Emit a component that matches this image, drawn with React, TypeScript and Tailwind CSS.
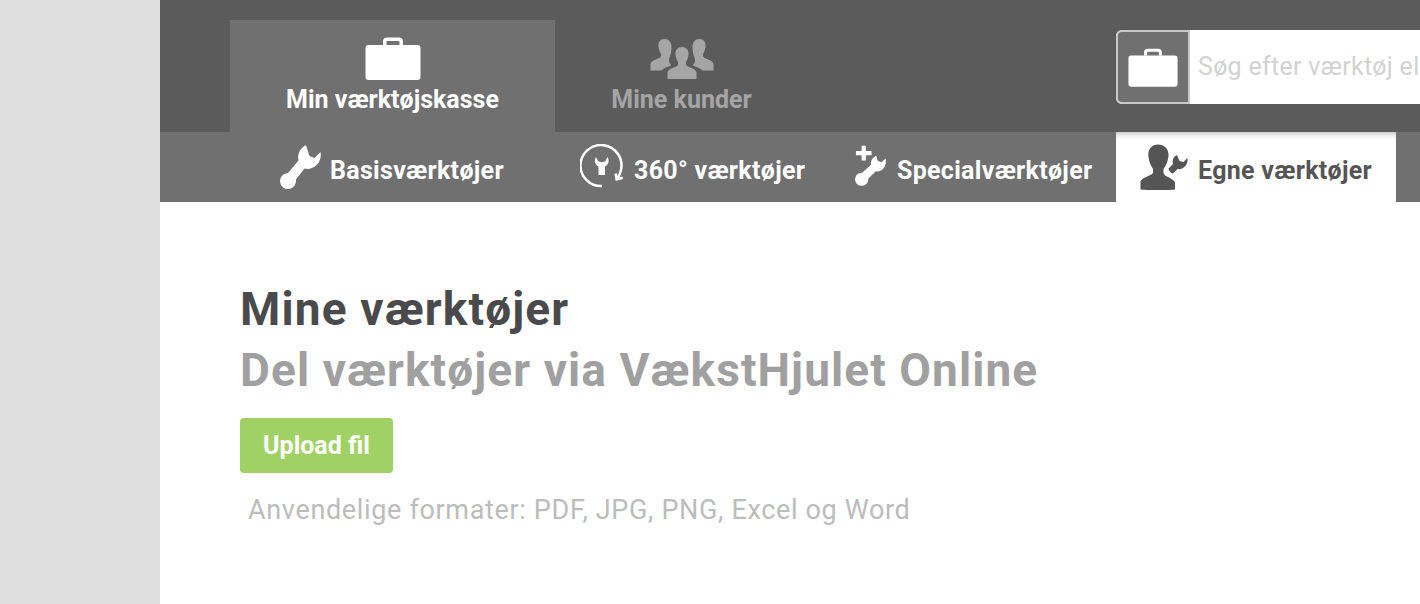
function Briefcase({ className }: { className?: string }) {
  return (
    <svg viewBox="0 0 56 44" className={className} fill="currentColor">
      <path d="M18 9V5.500C18 3 19.500 1.500 22 1.500H34C36.500 1.500 38 3 38 5.500V9H34.500V6C34.500 5.300 34.200 5 33.500 5H22.500C21.800 5 21.500 5.300 21.500 6V9Z" />
      <rect x="0.500" y="9" width="55" height="35" rx="3" />
    </svg>
  );
}

function Wrench({ className }: { className?: string }) {
  return (
    <svg viewBox="0 0 42 46" className={className} fill="currentColor">
      <path d="M26 1.300C20.500 3.500 17 10 18.500 16.500L8 29A8 8 0 1 0 15.900 35.600L24.500 24.500C30 26 36 23 39 18C41 14 41 11 40.500 8L34.500 14L29.500 12Z" />
    </svg>
  );
}

function Wheel({ className }: { className?: string }) {
  return (
    <svg viewBox="0 0 46 46" className={className}>
      <path
        d="M22 42A20.500 20.500 0 1 1 41 26Q40 31 37 35"
        fill="none"
        stroke="currentColor"
        strokeWidth="2.500"
      />
      <path d="M35.700 29.500L36.600 35.500L42.700 33.700" fill="none" stroke="currentColor" strokeWidth="2.500" />
      <path
        d="M16 13C13.500 17 15.500 21 18.500 22.500V31H25V22.500C28 21 30 17 27.500 13L25.500 17C24 18.500 19.500 18.500 18 17Z"
        fill="currentColor"
      />
    </svg>
  );
}

function PlusWrench({ className }: { className?: string }) {
  return (
    <svg viewBox="0 0 36 46" className={className} fill="currentColor">
      <path d="M7 .500H11.500V6H17.500V10.500H11.500V16H7V10.500H1V6H7Z" />
      <path d="M22.500 11C18 13.500 16 17 17 20.500L7.600 29A7 7 0 1 0 14 35.400L22 27.500C27 29 34 24 32.500 14L28 18L24 16.500Z" />
    </svg>
  );
}

function PersonWrench({ className }: { className?: string }) {
  return (
    <svg viewBox="0 0 50 46" className={className} fill="currentColor">
      <path d="M18 .500C11 .500 7.500 6 8.500 13C9 18 11 22 13 25V29C10 32.500 1 33.500 .5 38V45.500C10 46.500 26 46.500 35 45.500V38.500C34 35.500 29 33.500 25 31.500L23.500 29V25C26 21.500 28 17.500 28.500 12C29 5.500 25 .500 18 .500Z" />
      <path d="M37 11C33.500 12.500 32 16.500 33 20L28.500 24.500C28.500 26.500 30.500 29 33 29.500L37.500 25C43 26 48.500 21 47.500 14L43.500 18L39.500 17Z" />
    </svg>
  );
}

function People({ className }: { className?: string }) {
  return (
    <svg viewBox="0 0 64 41" className={className} fill="currentColor">
      <path d="M14.500 1C10 1 8 4.500 8.500 9C9 12 10 14.500 11 16V18.500C9 21 1 22 .5 26V32.500H11.500C14.500 29 21 28.500 21 27C18.500 24.500 18.500 21 20 18.500C21 15.500 21.500 12 21.500 9C21.500 4.500 19 1 14.500 1Z" />
      <path d="M49.500 1C54 1 56 4.500 55.500 9C55 12 54 14.500 53 16V18.500C55 21 63 22 63.500 26V32.500H52.500C49.500 29 43 28.500 43 27C45.500 24.500 45.500 21 44 18.500C43 15.500 42.500 12 42.500 9C42.500 4.500 45 1 49.500 1Z" />
      <path d="M32 9C27.500 9 25 12.500 25.500 17C26 20 27 22.500 28 24V27C25.500 29.500 18 30.500 17.500 34.500V41H46.500V34.500C46 30.500 38.500 29.500 36 27V24C37 22.500 38 20 38.500 17C39 12.500 36.500 9 32 9Z" />
    </svg>
  );
}

export default function App() {
  return (
    <div className="flex h-[604px] w-[1420px] overflow-hidden bg-white font-['Roboto',sans-serif]">
      <div className="w-40 shrink-0 bg-[#dedede]" />
      <div className="flex min-w-0 flex-1 flex-col">
        <header className="flex h-[132px] bg-[#5b5b5b] pl-[70px] pt-5">
          <div className="flex h-28 w-[325px] shrink-0 flex-col items-center bg-[#707070] pt-4 text-white">
            <Briefcase className="h-11 w-14" />
            <span className="mt-[4px] text-[25px] font-bold leading-8">Min værktøjskasse</span>
          </div>
          <div className="flex h-28 w-[253px] shrink-0 flex-col items-center pt-[17px] text-[#a5a5a5]">
            <People className="h-[43px] w-16" />
            <span className="mt-[4px] text-[25px] font-bold leading-8">Mine kunder</span>
          </div>
          <div className="ml-[308px] mt-[10px] flex h-[74px] w-[400px] shrink-0 overflow-hidden rounded-l-[6px] bg-white">
            <div className="flex w-[74px] shrink-0 items-center justify-center rounded-l-[6px] border-2 border-[#c9c9c9] bg-[#707070] text-white">
              <Briefcase className="h-10 w-[50px]" />
            </div>
            <span className="ml-2 self-center whitespace-nowrap text-[25px] leading-8 tracking-[0.3px] text-[#d2d2d2]">
              Søg efter værktøj eller kunde
            </span>
          </div>
        </header>
        <nav className="flex h-[70px] bg-[#707070] pl-[120px] text-[25px] font-bold leading-8 tracking-[0.3px] text-white">
          <a className="flex w-[300px] shrink-0 items-center gap-2">
            <Wrench className="h-[46px] w-[42px]" />
            <span className="pt-2">Basisværktøjer</span>
          </a>
          <a className="flex w-[275px] shrink-0 items-center gap-2">
            <Wheel className="h-[46px] w-[46px]" />
            <span className="pt-2">360° værktøjer</span>
          </a>
          <a className="flex w-[261px] shrink-0 items-center gap-2">
            <PlusWrench className="h-[46px] w-[34px]" />
            <span className="pt-2">Specialværktøjer</span>
          </a>
          <a className="flex w-[280px] shrink-0 items-center gap-2 bg-white pl-6 text-[#555555] shadow-[inset_0_6px_6px_-4px_rgba(0,0,0,0.25)]">
            <PersonWrench className="h-[46px] w-[50px]" />
            <span className="pt-2">Egne værktøjer</span>
          </a>
        </nav>
        <main className="pl-20 pt-[77px]">
          <h1 className="text-[46px] font-bold leading-[61px] tracking-[1.15px] text-[#4a4a4c]">Mine værktøjer</h1>
          <h2 className="text-[46px] font-bold leading-[61px] tracking-[1.08px] text-[#a0a0a0]">
            Del værktøjer via VækstHjulet Online
          </h2>
          <button className="mt-[17px] h-[55px] w-[153px] rounded bg-[#a0d165] text-[25px] font-bold text-white">
            Upload fil
          </button>
          <p className="ml-2 mt-5 text-[27px] leading-[34px] tracking-[0.66px] text-[#bcbcbc]">
            Anvendelige formater: PDF, JPG, PNG, Excel og Word
          </p>
        </main>
      </div>
    </div>
  );
}
